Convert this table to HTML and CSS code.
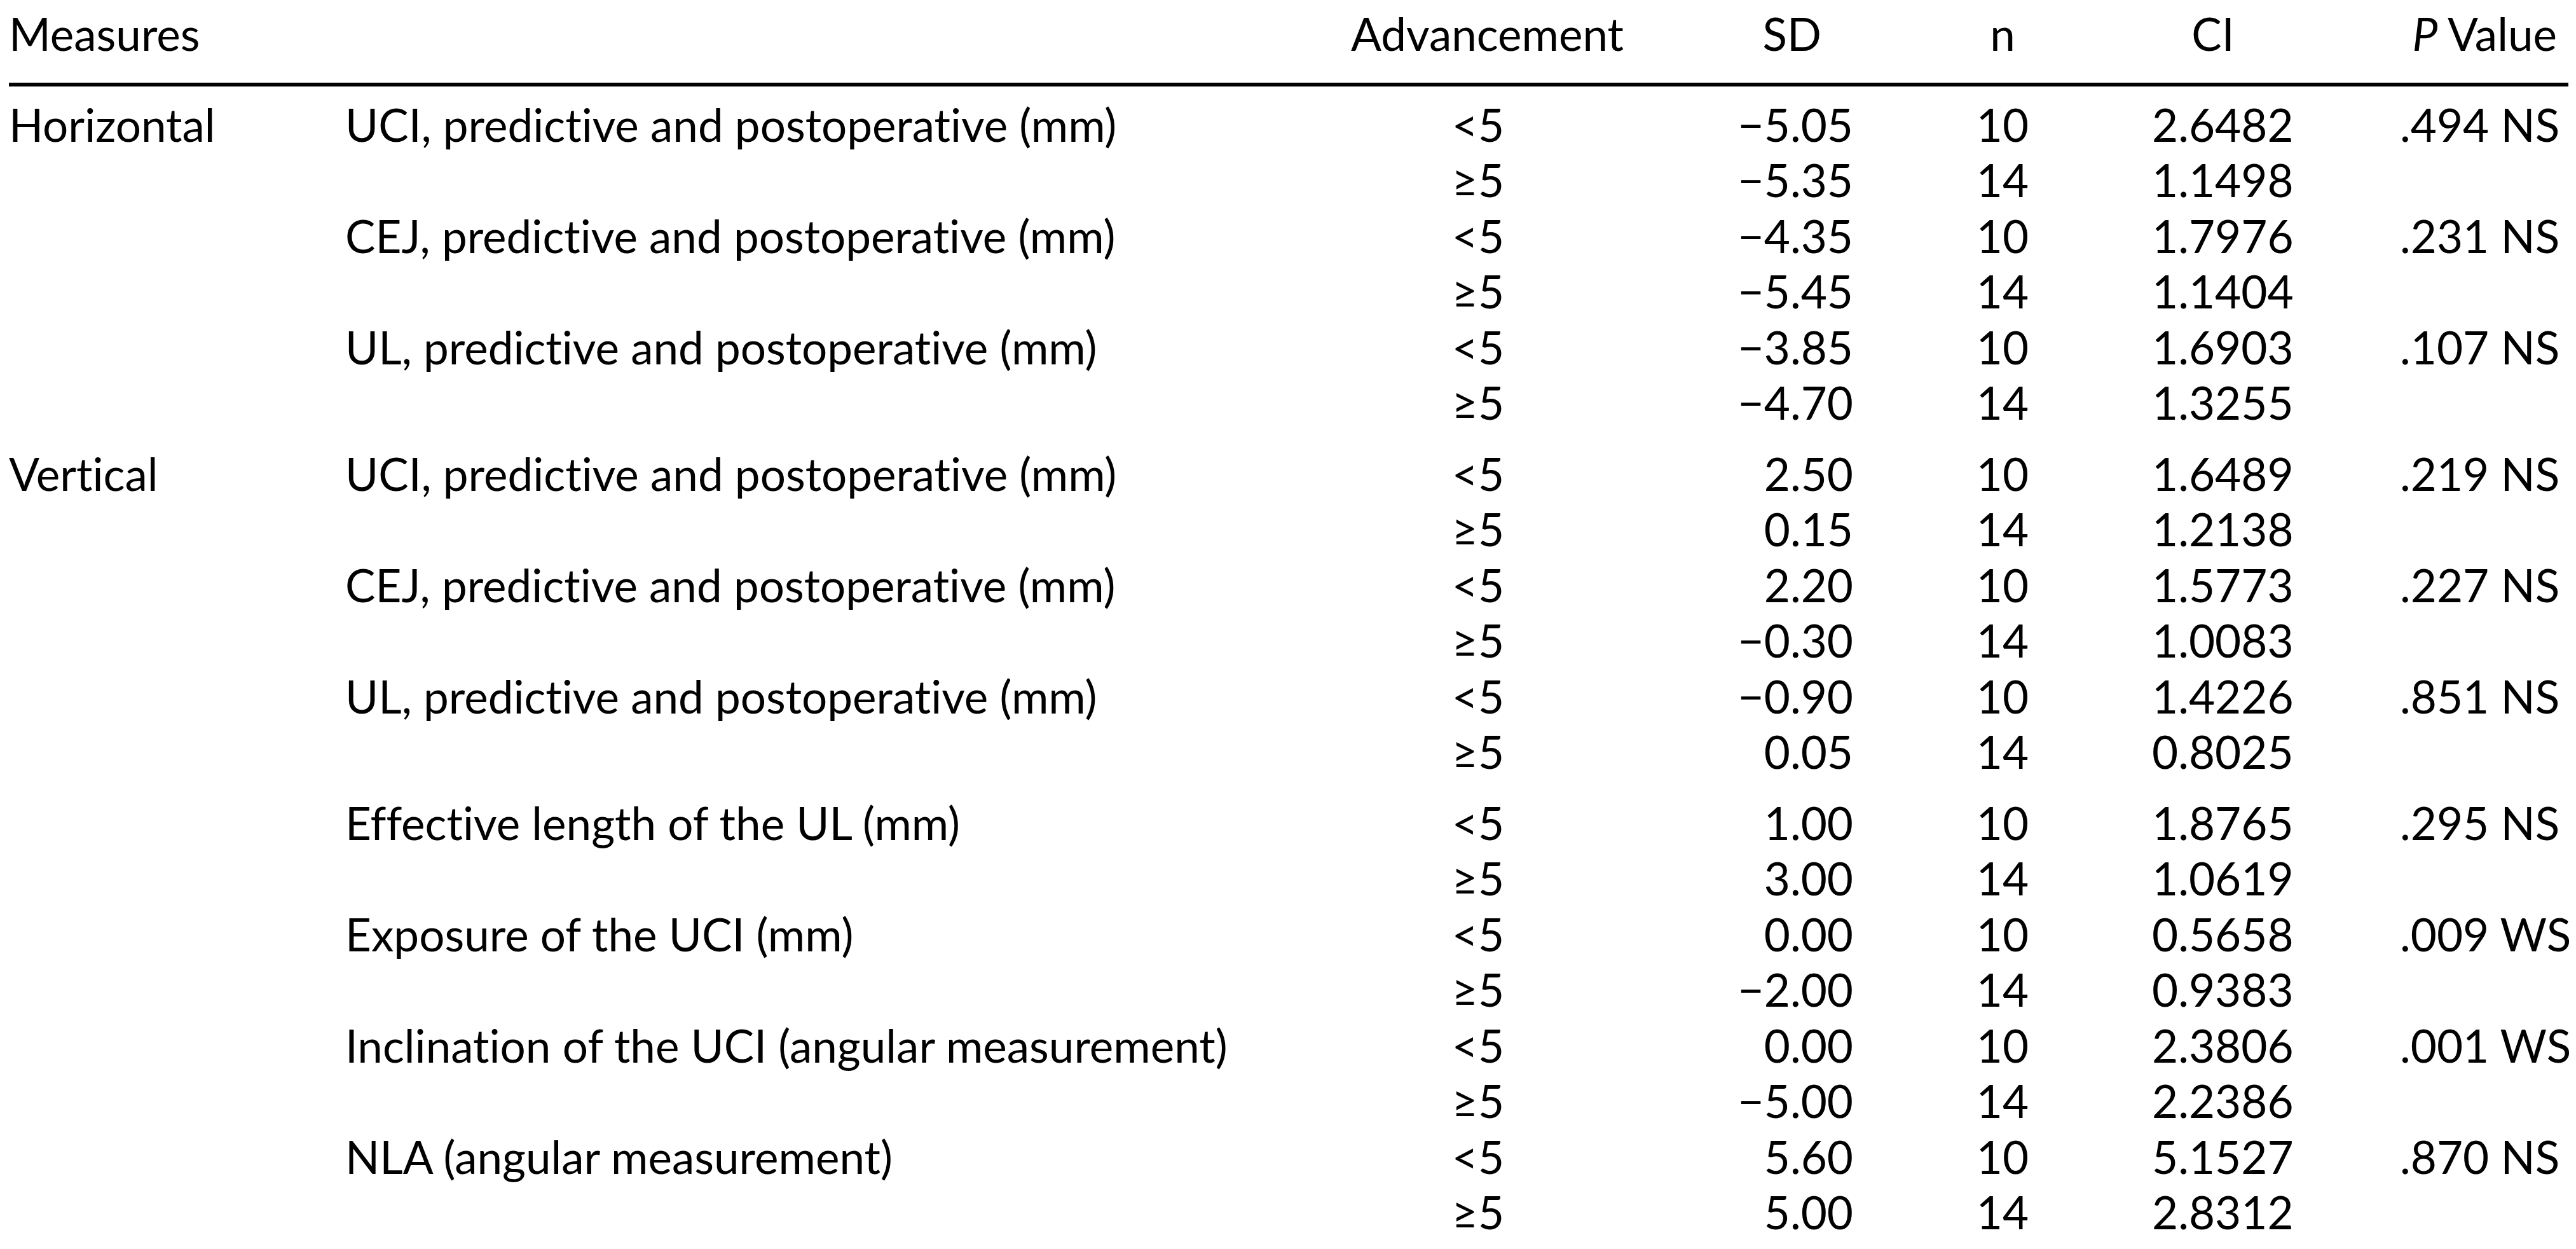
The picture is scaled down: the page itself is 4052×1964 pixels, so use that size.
FILE: index.html
```html
<!DOCTYPE html>
<html lang="en">
<head>
  <meta charset="UTF-8">
  <title>Measures by advancement</title>
  <link rel="stylesheet" href="styles.css">
</head>
<body>
  <table class="results">
    <colgroup>
      <col class="c-group">
      <col class="c-label">
      <col class="c-adv">
      <col class="c-sd">
      <col class="c-n">
      <col class="c-ci">
      <col class="c-p">
    </colgroup>
    <thead>
      <tr>
        <th class="left">Measures</th>
        <th></th>
        <th class="center">Advancement</th>
        <th class="sd-head">SD</th>
        <th class="center">n</th>
        <th class="center">CI</th>
        <th class="p-head"><i>P</i> Value</th>
      </tr>
    </thead>
    <tbody>
      <tr class="first">
        <td>Horizontal</td>
        <td>UCI, predictive and postoperative (mm)</td>
        <td class="center">&lt;5</td><td class="num">&minus;5.05</td><td class="center">10</td><td class="center">2.6482</td><td class="p">.494 NS</td>
      </tr>
      <tr>
        <td></td><td></td>
        <td class="center">&ge;5</td><td class="num">&minus;5.35</td><td class="center">14</td><td class="center">1.1498</td><td class="p"></td>
      </tr>
      <tr>
        <td></td>
        <td>CEJ, predictive and postoperative (mm)</td>
        <td class="center">&lt;5</td><td class="num">&minus;4.35</td><td class="center">10</td><td class="center">1.7976</td><td class="p">.231 NS</td>
      </tr>
      <tr>
        <td></td><td></td>
        <td class="center">&ge;5</td><td class="num">&minus;5.45</td><td class="center">14</td><td class="center">1.1404</td><td class="p"></td>
      </tr>
      <tr>
        <td></td>
        <td>UL, predictive and postoperative (mm)</td>
        <td class="center">&lt;5</td><td class="num">&minus;3.85</td><td class="center">10</td><td class="center">1.6903</td><td class="p">.107 NS</td>
      </tr>
      <tr>
        <td></td><td></td>
        <td class="center">&ge;5</td><td class="num">&minus;4.70</td><td class="center">14</td><td class="center">1.3255</td><td class="p"></td>
      </tr>
      <tr class="gap">
        <td>Vertical</td>
        <td>UCI, predictive and postoperative (mm)</td>
        <td class="center">&lt;5</td><td class="num">2.50</td><td class="center">10</td><td class="center">1.6489</td><td class="p">.219 NS</td>
      </tr>
      <tr>
        <td></td><td></td>
        <td class="center">&ge;5</td><td class="num">0.15</td><td class="center">14</td><td class="center">1.2138</td><td class="p"></td>
      </tr>
      <tr>
        <td></td>
        <td>CEJ, predictive and postoperative (mm)</td>
        <td class="center">&lt;5</td><td class="num">2.20</td><td class="center">10</td><td class="center">1.5773</td><td class="p">.227 NS</td>
      </tr>
      <tr>
        <td></td><td></td>
        <td class="center">&ge;5</td><td class="num">&minus;0.30</td><td class="center">14</td><td class="center">1.0083</td><td class="p"></td>
      </tr>
      <tr>
        <td></td>
        <td>UL, predictive and postoperative (mm)</td>
        <td class="center">&lt;5</td><td class="num">&minus;0.90</td><td class="center">10</td><td class="center">1.4226</td><td class="p">.851 NS</td>
      </tr>
      <tr>
        <td></td><td></td>
        <td class="center">&ge;5</td><td class="num">0.05</td><td class="center">14</td><td class="center">0.8025</td><td class="p"></td>
      </tr>
      <tr class="gap">
        <td></td>
        <td>Effective length of the UL (mm)</td>
        <td class="center">&lt;5</td><td class="num">1.00</td><td class="center">10</td><td class="center">1.8765</td><td class="p">.295 NS</td>
      </tr>
      <tr>
        <td></td><td></td>
        <td class="center">&ge;5</td><td class="num">3.00</td><td class="center">14</td><td class="center">1.0619</td><td class="p"></td>
      </tr>
      <tr>
        <td></td>
        <td>Exposure of the UCI (mm)</td>
        <td class="center">&lt;5</td><td class="num">0.00</td><td class="center">10</td><td class="center">0.5658</td><td class="p">.009 WS</td>
      </tr>
      <tr>
        <td></td><td></td>
        <td class="center">&ge;5</td><td class="num">&minus;2.00</td><td class="center">14</td><td class="center">0.9383</td><td class="p"></td>
      </tr>
      <tr>
        <td></td>
        <td>Inclination of the UCI (angular measurement)</td>
        <td class="center">&lt;5</td><td class="num">0.00</td><td class="center">10</td><td class="center">2.3806</td><td class="p">.001 WS</td>
      </tr>
      <tr>
        <td></td><td></td>
        <td class="center">&ge;5</td><td class="num">&minus;5.00</td><td class="center">14</td><td class="center">2.2386</td><td class="p"></td>
      </tr>
      <tr>
        <td></td>
        <td>NLA (angular measurement)</td>
        <td class="center">&lt;5</td><td class="num">5.60</td><td class="center">10</td><td class="center">5.1527</td><td class="p">.870 NS</td>
      </tr>
      <tr>
        <td></td><td></td>
        <td class="center">&ge;5</td><td class="num">5.00</td><td class="center">14</td><td class="center">2.8312</td><td class="p"></td>
      </tr>
    </tbody>
  </table>
</body>
</html>
```

FILE: styles.css
```css
body {
  margin: 0;
  background: #fff;
  color: #000;
  font-family: Lato, "Open Sans", sans-serif;
  font-size: 71px;
  font-variant-ligatures: none;
  font-feature-settings: "liga" 0, "dlig" 0, "clig" 0;
}
.results {
  margin-left: 14px;
  width: 4026px;
  table-layout: fixed;
  border-collapse: collapse;
}
.c-group { width: 529px; }
.c-label { width: 1582px; }
.c-adv { width: 400px; }
.c-sd { width: 390px; }
.c-n { width: 470px; }
.c-ci { width: 192px; }
.c-p { width: 463px; }
th, td {
  padding: 0;
  line-height: 87.5px;
  white-space: nowrap;
  font-weight: normal;
  text-align: left;
}
th {
  padding-top: 9px;
  padding-bottom: 33px;
  border-bottom: 6px solid #000;
}
.results .center { text-align: center; }
.results .num { text-align: right; }
.sd-head { text-align: right; padding-right: 50px; }
.p-head { text-align: right; padding-right: 18px; }
.results .p { padding-left: 198px; }
tr.first td { padding-top: 16px; }
tr.gap td { padding-top: 24px; }
```
